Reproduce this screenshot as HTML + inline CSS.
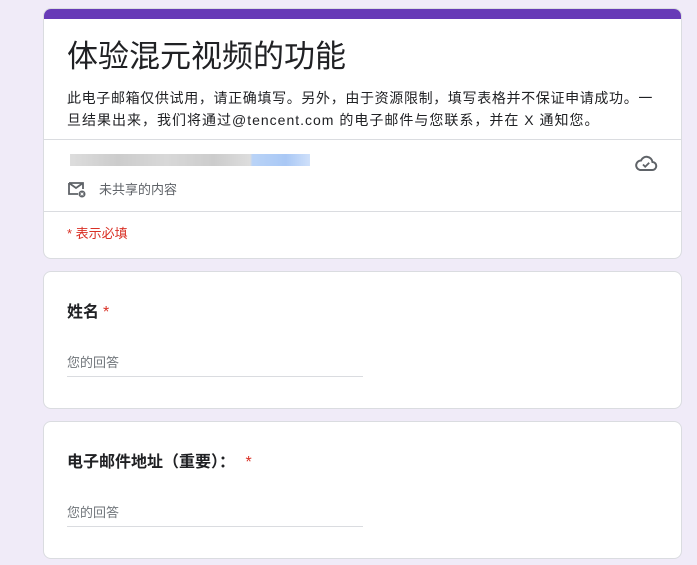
<!DOCTYPE html>
<html><head><meta charset="utf-8"><style>
*{margin:0;padding:0;box-sizing:border-box}
body{width:697px;height:565px;background:#f0ebf8;font-family:"Liberation Sans","Noto Sans CJK SC",sans-serif;overflow:hidden;position:relative;color:#202124}
.card{position:absolute;left:43px;width:639px;background:#fff;border:1px solid #dadce0;border-radius:8px;overflow:hidden}
.bar{height:10px;background:#673ab7}
.sep{height:1px;background:#dadce0}
.q{font-size:16px;font-weight:bold;position:absolute;left:23px}
.star{color:#d93025;font-weight:normal;margin-left:4px}
.inp{position:absolute;left:23px;width:296px;border-bottom:1px solid #dadce0;font-size:13px;color:#70757a;padding-bottom:5px}
</style></head><body>
<div class="card" style="top:8px;height:251px">
 <div class="bar"></div>
 <div style="position:absolute;left:23px;top:22px;font-size:31px;color:#202124">体验混元视频的功能</div>
 <div style="position:absolute;left:23px;top:78px;width:610px;font-size:14px;line-height:22px;color:#202124;white-space:nowrap"><span style="letter-spacing:0.65px">此电子邮箱仅供试用，请正确填写。另外，由于资源限制，填写表格并不保证申请成功。一</span><br><span style="letter-spacing:1px">旦结果出来，我们将通过@tencent.com 的电子邮件与您联系，并在 X 通知您。</span></div>
 <div class="sep" style="position:absolute;top:130px;left:0;right:0"></div>
 <div style="position:absolute;left:26px;top:145px;width:240px;height:12px;background:linear-gradient(90deg,#ddd,#ccc 20%,#d8d8d8 40%,#ccc 60%,#ddd 75%,#b9d3f7 76%,#a9c8f5 90%,#cfe0fa)"></div>
 <svg style="position:absolute;left:23px;top:171px" width="20" height="18" viewBox="0 0 20 18"><path d="M2 3h14v6M2 3v11h9M2 3l7 5 7-5" fill="none" stroke="#5f6368" stroke-width="1.8"/><circle cx="15" cy="14" r="3.5" fill="#5f6368"/><path d="M13.6 12.6l2.8 2.8M16.4 12.6l-2.8 2.8" stroke="#fff" stroke-width="1"/></svg>
 <div style="position:absolute;left:55px;top:170px;font-size:13px;color:#5f6368">未共享的内容</div>
 <svg style="position:absolute;left:590px;top:144px" width="24" height="20" viewBox="0 0 24 20"><path d="M6 17h12a4 4 0 0 0 .5-8A6 6 0 0 0 7 7.5 4.8 4.8 0 0 0 6 17z" fill="none" stroke="#5f6368" stroke-width="2"/><path d="M9 11.5l2.2 2.2 4-4" fill="none" stroke="#5f6368" stroke-width="1.8"/></svg>
 <div class="sep" style="position:absolute;top:202px;left:0;right:0"></div>
 <div style="position:absolute;left:23px;top:214px;font-size:13px;color:#d93025">* 表示必填</div>
</div>
<div class="card" style="top:271px;height:138px">
 <div class="q" style="top:26px">姓名<span class="star">*</span></div>
 <div class="inp" style="top:80px">您的回答</div>
</div>
<div class="card" style="top:421px;height:138px">
 <div class="q" style="top:26px">电子邮件地址（重要）： <span class="star" style="margin-left:6px">*</span></div>
 <div class="inp" style="top:80px">您的回答</div>
</div>
</body></html>
